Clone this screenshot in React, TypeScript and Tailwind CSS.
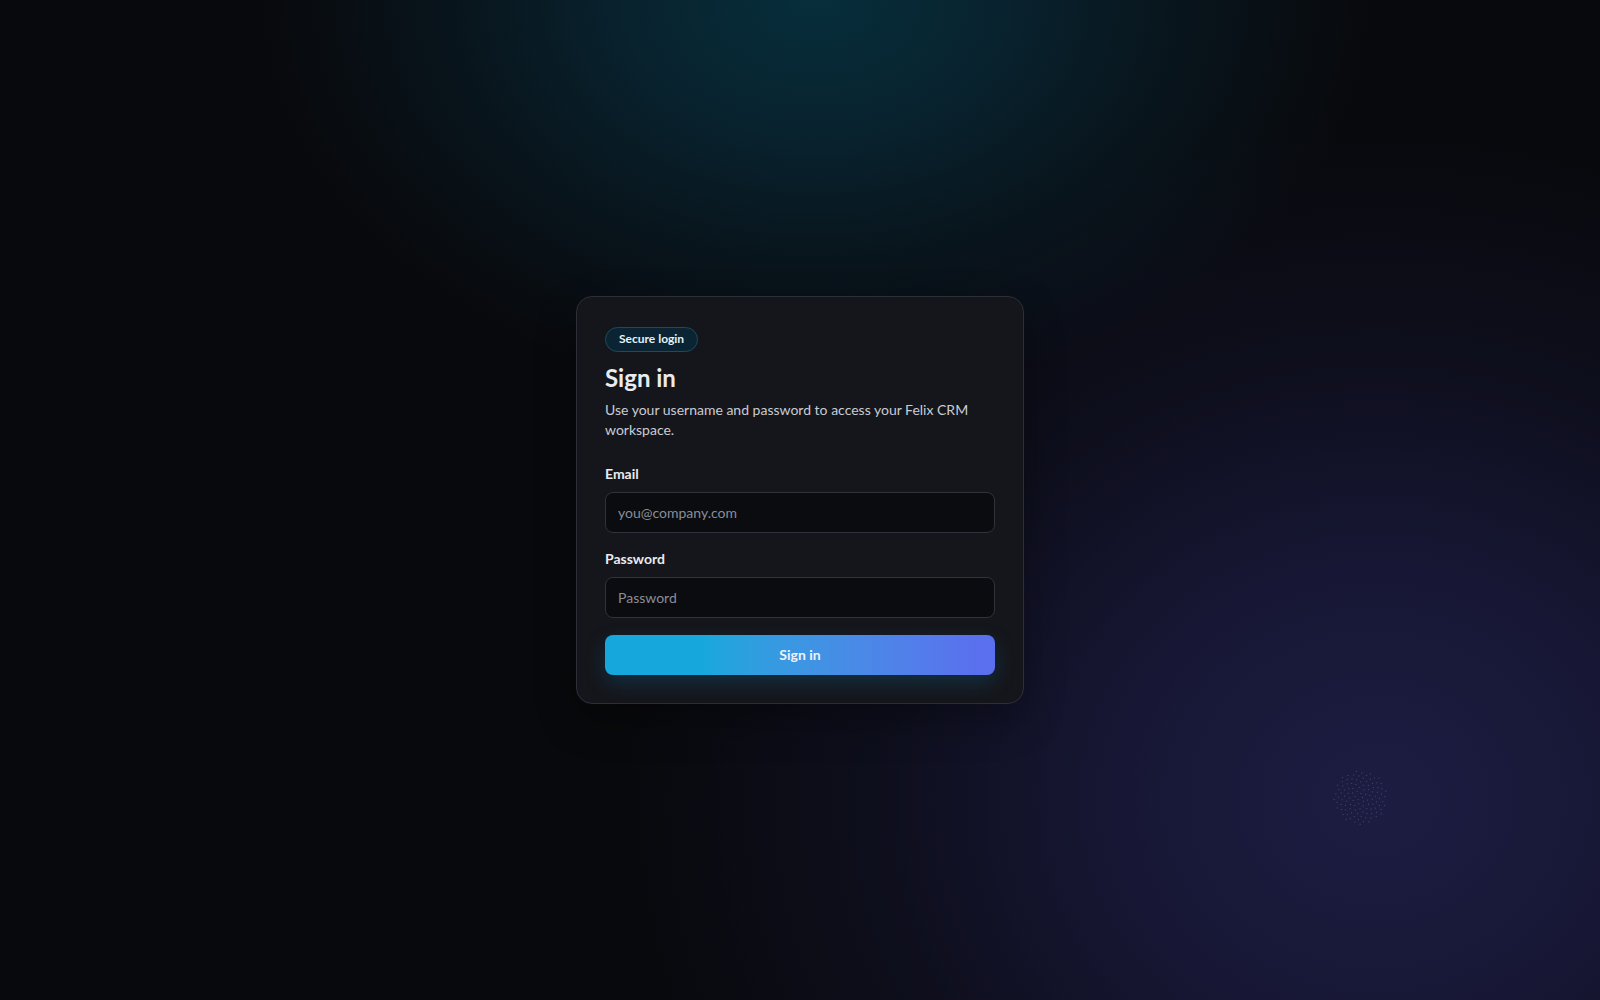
const dots = Array.from({ length: 110 }, (_, i) => {
    // sunflower spread inside a small disc
    const r = 27 * Math.sqrt((i + 0.5) / 110);
    const a = i * 2.39996;
    return { x: 30 + r * Math.cos(a), y: 30 + r * Math.sin(a) };
});

export default function App() {
    return (
        <div className="relative flex min-h-screen w-full items-center justify-center overflow-hidden bg-[#08090c] bg-[radial-gradient(ellipse_560px_400px_at_51%_0%,rgba(7,48,62,0.95)_0%,rgba(8,40,54,0.8)_35%,rgba(9,30,42,0.55)_65%,rgba(9,20,28,0)_100%),radial-gradient(ellipse_760px_680px_at_86%_80%,rgba(30,30,70,0.95)_0%,rgba(26,26,62,0.8)_35%,rgba(20,20,46,0.5)_65%,rgba(14,14,30,0)_100%)] font-['Lato',sans-serif]">
            <svg className="pointer-events-none absolute left-[1330px] top-[767px] h-[60px] w-[60px] opacity-50" viewBox="0 0 60 60">
                {dots.map((d, i) => (
                    <rect key={i} x={d.x} y={d.y} width="1" height="1" fill="#7a7a8a" />
                ))}
            </svg>

            <div className="relative w-[448px] rounded-2xl border border-[#2c2f38] bg-[#15161b] px-7 pb-7 pt-7 shadow-[0_16px_40px_rgba(0,0,0,0.3)]">
                <span className="inline-flex h-[25px] items-center rounded-full border border-[#1f4a5c] bg-[#0b2433] px-[13px] text-xs font-bold text-[#e6f2f7]">
                    Secure login
                </span>
                <h1 className="mt-[10px] text-2xl font-bold leading-8 text-[#e8ebf0]">Sign in</h1>
                <p className="mt-1.5 text-sm leading-5 text-[#c9ccd4]">
                    Use your username and password to access your Felix CRM workspace.
                </p>

                <form className="mt-6 flex flex-col gap-4" onSubmit={(e) => e.preventDefault()}>
                    <div className="flex flex-col gap-2">
                        <label className="text-sm font-bold leading-5 text-[#e8ebf0]">Email</label>
                        <input
                            type="email"
                            placeholder="you@company.com"
                            className="h-[41px] w-full rounded-lg border border-[#30323e] bg-[#0b0c10] px-3 text-sm text-[#e8ebf0] outline-none placeholder:text-[#8a8d97]"
                        />
                    </div>
                    <div className="flex flex-col gap-2">
                        <label className="text-sm font-bold leading-5 text-[#e8ebf0]">Password</label>
                        <input
                            type="password"
                            placeholder="Password"
                            className="h-[41px] w-full rounded-lg border border-[#30323e] bg-[#0b0c10] px-3 text-sm text-[#e8ebf0] outline-none placeholder:text-[#8a8d97]"
                        />
                    </div>
                    <button
                        type="submit"
                        className="mt-px h-10 w-full rounded-lg bg-gradient-to-r from-[#16a8dc] from-25% to-[#5a70ee] to-95% text-sm font-bold text-[#eef2fb] shadow-[0_8px_20px_rgba(14,120,180,0.25)]"
                    >
                        Sign in
                    </button>
                </form>
            </div>
        </div>
    );
}
